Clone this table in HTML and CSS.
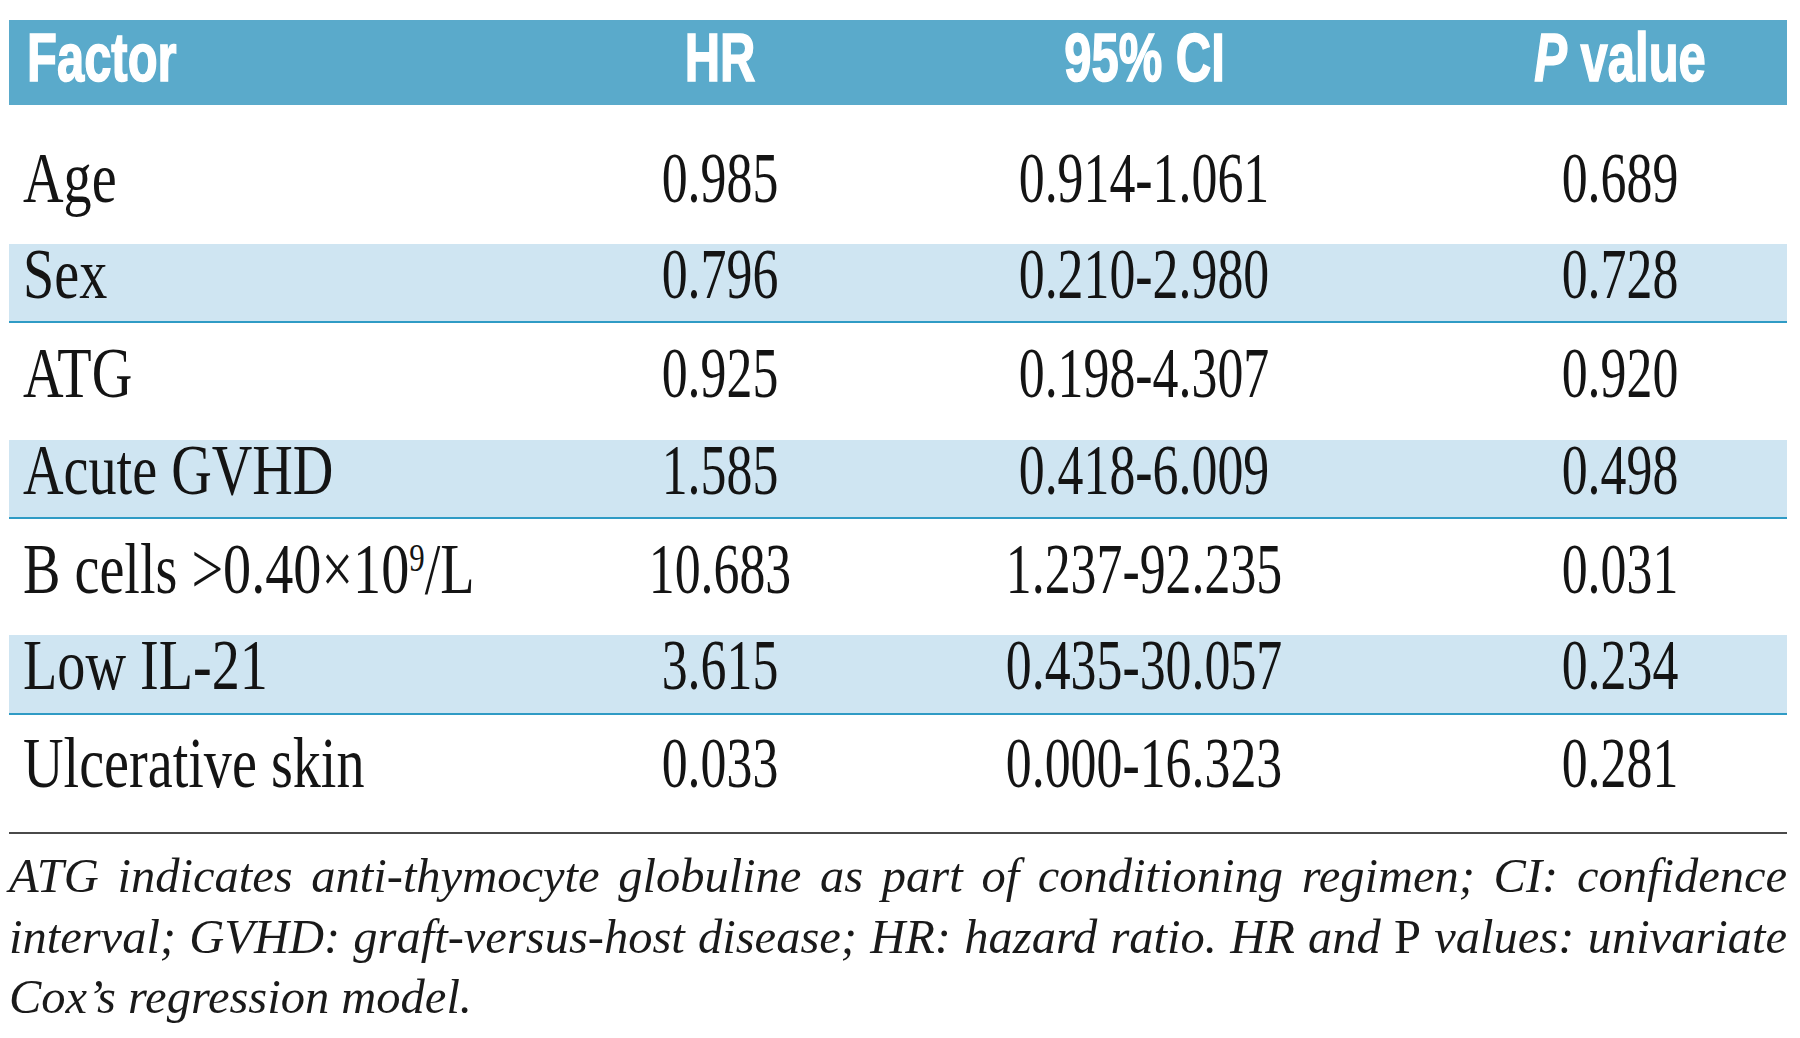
FILE: index.html
```html
<!DOCTYPE html>
<html>
<head>
<meta charset="utf-8">
<link rel="stylesheet" href="styles.css">
</head>
<body>
<div class="page">
  <div class="table">
    <div class="row head">
      <div class="cell c1"><span class="h">Factor</span></div>
      <div class="cell c2"><span class="h">HR</span></div>
      <div class="cell c3"><span class="h">95% CI</span></div>
      <div class="cell c4"><span class="h"><i>P</i> value</span></div>
    </div>
    <div class="row white first">
      <div class="cell c1"><span class="f">Age</span></div>
      <div class="cell c2"><span class="n">0.985</span></div>
      <div class="cell c3"><span class="n">0.914-1.061</span></div>
      <div class="cell c4"><span class="n">0.689</span></div>
    </div>
    <div class="row band">
      <div class="cell c1"><span class="f">Sex</span></div>
      <div class="cell c2"><span class="n">0.796</span></div>
      <div class="cell c3"><span class="n">0.210-2.980</span></div>
      <div class="cell c4"><span class="n">0.728</span></div>
    </div>
    <div class="row white">
      <div class="cell c1"><span class="f">ATG</span></div>
      <div class="cell c2"><span class="n">0.925</span></div>
      <div class="cell c3"><span class="n">0.198-4.307</span></div>
      <div class="cell c4"><span class="n">0.920</span></div>
    </div>
    <div class="row band">
      <div class="cell c1"><span class="f">Acute GVHD</span></div>
      <div class="cell c2"><span class="n">1.585</span></div>
      <div class="cell c3"><span class="n">0.418-6.009</span></div>
      <div class="cell c4"><span class="n">0.498</span></div>
    </div>
    <div class="row white mid">
      <div class="cell c1"><span class="f">B cells &gt;0.40×10<span class="sup">9</span>/L</span></div>
      <div class="cell c2"><span class="n">10.683</span></div>
      <div class="cell c3"><span class="n">1.237-92.235</span></div>
      <div class="cell c4"><span class="n">0.031</span></div>
    </div>
    <div class="row band last-band">
      <div class="cell c1"><span class="f">Low IL-21</span></div>
      <div class="cell c2"><span class="n">3.615</span></div>
      <div class="cell c3"><span class="n">0.435-30.057</span></div>
      <div class="cell c4"><span class="n">0.234</span></div>
    </div>
    <div class="row white final">
      <div class="cell c1"><span class="f">Ulcerative skin</span></div>
      <div class="cell c2"><span class="n">0.033</span></div>
      <div class="cell c3"><span class="n">0.000-16.323</span></div>
      <div class="cell c4"><span class="n">0.281</span></div>
    </div>
  </div>
  <div class="rule"></div>
  <div class="note">
    <p class="line just">ATG indicates anti-thymocyte globuline as part of conditioning regimen; CI: confidence</p>
    <p class="line just">interval; GVHD: graft-versus-host disease; HR: hazard ratio. HR and <span class="up">P</span> values: univariate</p>
    <p class="line">Cox’s regression model.</p>
  </div>
</div>
</body>
</html>
```

FILE: styles.css
```css
html, body {
  margin: 0;
  padding: 0;
  background: #ffffff;
}

.page {
  width: 1778px;
  margin: 20px 0 0 9px;
}

.table {
  display: flex;
  flex-direction: column;
}

.row {
  display: grid;
  grid-template-columns: 551px 320px 528px 379px;
  font-family: "Liberation Serif", "Times New Roman", serif;
  font-size: 72px;
  line-height: 60px;
  color: #141414;
}

.cell {
  text-align: center;
  white-space: nowrap;
}

.cell.c1 {
  text-align: left;
  padding-left: 14px;
}

.cell.c4 {
  padding-left: 45px;
}

.head {
  background: #5aaacb;
  height: 85px;
  box-sizing: border-box;
  padding: 3px 0 14px;
  font-family: "Liberation Sans", Arial, sans-serif;
  font-weight: bold;
  font-size: 68px;
  line-height: 68px;
  color: #ffffff;
}

.head .cell.c1 {
  padding-left: 18px;
}

.h {
  display: inline-block;
  transform: scaleX(0.72);
  transform-origin: center;
  -webkit-text-stroke: 1.6px #ffffff;
}

.head .c1 .h {
  transform-origin: left;
}

.h i {
  font-style: italic;
}

.f {
  display: inline-block;
  transform: scaleX(0.78);
  transform-origin: left;
}

.n {
  display: inline-block;
  transform: scaleX(0.72);
  transform-origin: center;
}

.sup {
  font-size: 0.55em;
  line-height: 0;
  position: relative;
  top: -0.55em;
}

.white {
  padding: 20px 0 37px;
}

.white.first {
  padding: 43px 0 36px;
}

.white.mid {
  padding: 20px 0 36px;
}

.white.final {
  padding: 18px 0 39px;
}

.band {
  background: #cfe5f2;
  padding: 0 0 17px;
  border-bottom: 2px solid #2f9bc5;
}

.band.last-band {
  padding-bottom: 18px;
}

.rule {
  height: 2px;
  background: #4a4a4a;
}

.note {
  margin-top: 12px;
  font-family: "Liberation Serif", "Times New Roman", serif;
  font-style: italic;
  font-size: 48.5px;
  line-height: 60.5px;
  color: #1a1a1a;
}

.line {
  margin: 0;
}

.line.just {
  text-align: justify;
  text-align-last: justify;
}

.up {
  font-style: normal;
}
```
